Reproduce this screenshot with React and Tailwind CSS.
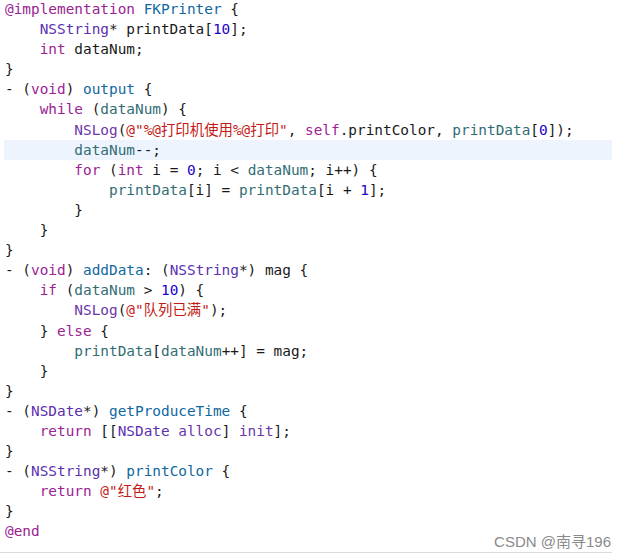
import React from 'react';

const K = 'text-[#9b2393]';
const D = 'text-[#0f68a0]';
const C = 'text-[#5b30b0]';
const F = 'text-[#6c36a9]';
const V = 'text-[#326d74]';
const N = 'text-[#1c00cf]';
const S = 'text-[#c41a16]';

const lines = [
  [['@implementation', K], ' ', ['FKPrinter', D], ' {'],
  ['    ', ['NSString', C], '* printData[', ['10', N], '];'],
  ['    ', ['int', K], ' dataNum;'],
  ['}'],
  ['- (', ['void', K], ') ', ['output', D], ' {'],
  ['    ', ['while', K], ' (', ['dataNum', V], ') {'],
  ['        ', ['NSLog', F], '(', ['@"%@打印机使用%@打印"', S], ', ', ['self', K], '.printColor, ', ['printData', V], '[', ['0', N], ']);'],
  ['        ', ['dataNum', V], '--;'],
  ['        ', ['for', K], ' (', ['int', K], ' i = ', ['0', N], '; i < ', ['dataNum', V], '; i++) {'],
  ['            ', ['printData', V], '[i] = ', ['printData', V], '[i + ', ['1', N], '];'],
  ['        }'],
  ['    }'],
  ['}'],
  ['- (', ['void', K], ') ', ['addData', D], ': (', ['NSString', C], '*) mag {'],
  ['    ', ['if', K], ' (', ['dataNum', V], ' > ', ['10', N], ') {'],
  ['        ', ['NSLog', F], '(', ['@"队列已满"', S], ');'],
  ['    } ', ['else', K], ' {'],
  ['        ', ['printData', V], '[', ['dataNum', V], '++] = mag;'],
  ['    }'],
  ['}'],
  ['- (', ['NSDate', C], '*) ', ['getProduceTime', D], ' {'],
  ['    ', ['return', K], ' [[', ['NSDate', C], ' ', ['alloc', F], '] ', ['init', F], '];'],
  ['}'],
  ['- (', ['NSString', C], '*) ', ['printColor', D], ' {'],
  ['    ', ['return', K], ' ', ['@"红色"', S], ';'],
  ['}'],
  [['@end', K]],
];

function CodeLine({ parts, active }) {
  return (
    <div className={`h-[20.1px] pl-[1px] whitespace-pre ${active ? 'bg-[#edf4fd]' : ''}`}>
      {parts.map((p, i) =>
        typeof p === 'string' ? <span key={i}>{p}</span> : <span key={i} className={p[1]}>{p[0]}</span>
      )}
    </div>
  );
}

export default function App() {
  return (
    <div className="relative w-[626px] h-[558px] bg-white overflow-hidden">
      <div
        className="ml-[4px] mt-[-1px] w-[608px] text-[14.4px] leading-[20.1px] text-[#1a1a1a]"
        style={{ fontFamily: '"DejaVu Sans Mono", "Noto Sans CJK SC", monospace' }}
      >
        {lines.map((l, i) => (
          <CodeLine key={i} parts={l} active={i === 7} />
        ))}
      </div>
      <div className="mt-[10px] w-[612px] h-[1px] bg-[#dcdcdc]" />
      <div
        className="absolute right-[15px] top-[532px] text-[15px] leading-[20px] text-[#8a8a8a]"
        style={{ fontFamily: '"Liberation Sans", "Noto Sans CJK SC", sans-serif' }}
      >
        CSDN @南寻196
      </div>
    </div>
  );
}
